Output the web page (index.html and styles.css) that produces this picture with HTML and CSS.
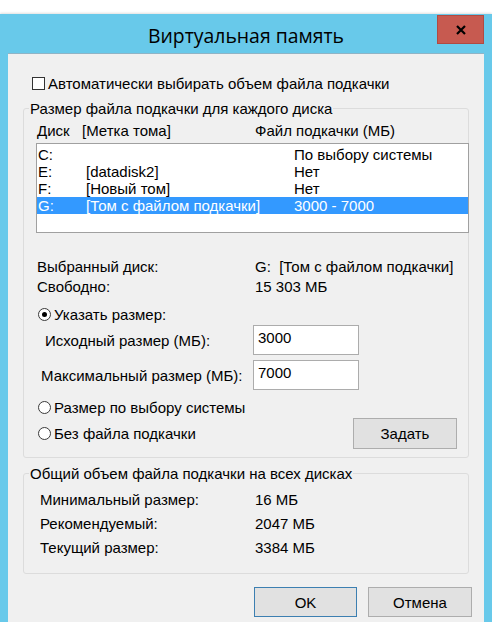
FILE: index.html
```html
<!DOCTYPE html>
<html lang="ru">
<head>
<meta charset="utf-8">
<title>Виртуальная память</title>
<link rel="stylesheet" href="styles.css">
</head>
<body>
<div class="window">
  <div class="titlebar">
    <div></div>
    <div class="title">Виртуальная память</div>
    <div class="close-wrap">
      <div class="close">
        <svg width="10" height="10" viewBox="0 0 10 10"><path d="M1 1 L9 9 M9 1 L1 9" stroke="#000" stroke-width="2.2" fill="none"/></svg>
      </div>
    </div>
  </div>
  <div class="content">
    <div class="check-row">
      <span class="checkbox"></span>
      <span>Автоматически выбирать объем файла подкачки</span>
    </div>

    <fieldset class="group g1">
      <legend>Размер файла подкачки для каждого диска</legend>
      <div class="list-head">
        <span>Диск</span>
        <span>[Метка тома]</span>
        <span>Файл подкачки (МБ)</span>
      </div>
      <div class="listbox">
        <div class="item"><span>C:</span><span></span><span>По выбору системы</span></div>
        <div class="item"><span>E:</span><span>[datadisk2]</span><span>Нет</span></div>
        <div class="item"><span>F:</span><span>[Новый том]</span><span>Нет</span></div>
        <div class="item selected"><span>G:</span><span>[Том с файлом подкачки]</span><span>3000 - 7000</span></div>
      </div>
      <div class="info">
        <div class="info-row"><span>Выбранный диск:</span><span>G:&nbsp; [Том с файлом подкачки]</span></div>
        <div class="info-row"><span>Свободно:</span><span>15 303 МБ</span></div>
      </div>
      <div class="radio-row first"><span class="radio checked"></span><span>Указать размер:</span></div>
      <div class="field-row r1"><span class="lbl">Исходный размер (МБ):</span><div class="input">3000</div></div>
      <div class="field-row r2"><span class="lbl">Максимальный размер (МБ):</span><div class="input">7000</div></div>
      <div class="radio-row second"><span class="radio"></span><span>Размер по выбору системы</span></div>
      <div class="radio-row third">
        <div class="radio-label"><span class="radio"></span><span>Без файла подкачки</span></div>
        <div class="btn set">Задать</div>
      </div>
    </fieldset>

    <fieldset class="group g2">
      <legend>Общий объем файла подкачки на всех дисках</legend>
      <div class="totals">
        <div class="total-row"><span>Минимальный размер:</span><span>16 МБ</span></div>
        <div class="total-row"><span>Рекомендуемый:</span><span>2047 МБ</span></div>
        <div class="total-row"><span>Текущий размер:</span><span>3384 МБ</span></div>
      </div>
    </fieldset>

    <div class="buttons">
      <div class="btn ok">OK</div>
      <div class="btn">Отмена</div>
    </div>
  </div>
</div>
</body>
</html>
```
FILE: styles.css
```css
* { box-sizing: border-box; }
html, body { margin: 0; padding: 0; background: #fff; }
body {
  font-family: "Liberation Sans", Arial, sans-serif;
  font-size: 15px;
  color: #000;
  overflow: hidden;
}
.window {
  margin-top: 14px;
  height: 608px;
  padding: 0 8px;
  background: #68c9ea;
  box-shadow: 0 -1px 2px rgba(0,0,0,0.12);
}
.titlebar {
  height: 39px;
  display: grid;
  grid-template-columns: 1fr auto 1fr;
  align-items: start;
}
.title {
  font-family: "Open Sans", "Noto Sans", sans-serif;
  font-size: 19.4px;
  line-height: 28px;
  padding-top: 8px;
  color: #000;
  white-space: nowrap;
}
.close-wrap { display: flex; justify-content: flex-end; }
.close {
  margin-top: 1px;
  width: 47px;
  height: 29px;
  background: #c75a50;
  border: 1px solid #b04a42;
  display: flex;
  align-items: center;
  justify-content: center;
}
.close svg { display: block; margin-top: 1px; }
.content {
  background: #f0f0f0;
  border-top: 1px solid #8fb4c6;
  height: 569px;
  padding-top: 21px;
}
.check-row {
  display: flex;
  align-items: center;
  height: 17px;
  line-height: 17px;
  padding-left: 24px;
  gap: 3px;
}
.checkbox {
  width: 13px;
  height: 13px;
  border: 1px solid #333;
  background: #fff;
  flex: none;
}
.group {
  margin: 8px 15px 0 15px;
  padding: 0;
  border: 1px solid #dcdcdc;
  border-radius: 3px;
  min-width: 0;
}
.group legend {
  margin-left: 5px;
  padding: 0 1px;
  line-height: 17px;
  height: 17px;
}
.g1 { padding-bottom: 8px; }
.list-head {
  margin-top: 5px;
  height: 17px;
  line-height: 17px;
  display: grid;
  grid-template-columns: 45px 173px 1fr;
  padding-left: 13px;
  white-space: nowrap;
}
.listbox {
  margin: 4px -1px 0 12px;
  height: 90px;
  border: 1px solid #a0a0a0;
  background: #fff;
  padding-top: 2px;
}
.item {
  height: 17px;
  line-height: 17px;
  display: grid;
  grid-template-columns: 48px 208px 1fr;
  padding-left: 1px;
  white-space: nowrap;
}
.item.selected { background: #3399ff; color: #fff; }
.info { margin-top: 24px; padding-left: 13px; }
.info-row {
  height: 20px;
  line-height: 20px;
  display: grid;
  grid-template-columns: 218px 1fr;
  white-space: nowrap;
}
.radio-row {
  display: flex;
  align-items: center;
  padding-left: 14px;
  gap: 3px;
  line-height: 17px;
  height: 17px;
}
.radio-row.first { margin-top: 9px; }
.radio-row.second { margin-top: 9px; }
.radio-row.third {
  margin-top: 2px;
  height: 31px;
  justify-content: space-between;
  padding-right: 11px;
}
.radio-label { display: flex; align-items: center; gap: 3px; }
.radio {
  width: 13px;
  height: 13px;
  border-radius: 50%;
  border: 1px solid #3a3a3a;
  background: #fff;
  flex: none;
  display: flex;
  align-items: center;
  justify-content: center;
}
.radio.checked::after {
  content: "";
  width: 5px;
  height: 5px;
  border-radius: 50%;
  background: #000;
}
.field-row {
  display: flex;
  align-items: center;
  height: 30px;
  white-space: nowrap;
}
.field-row.r1 { margin-top: 2px; padding-left: 21px; }
.field-row.r2 { margin-top: 5px; padding-left: 17px; }
.field-row .lbl { flex: 1; }
.input {
  width: 106px;
  height: 30px;
  margin-right: 109px;
  background: #fff;
  border: 1px solid #acacac;
  padding: 3px 0 0 4px;
  line-height: 17px;
}
.btn {
  height: 30px;
  background: #e1e1e1;
  border: 1px solid #adadad;
  display: flex;
  align-items: center;
  justify-content: center;
  line-height: 17px;
}
.btn.set { width: 104px; height: 31px; }
.g2 { margin-top: 7px; padding-bottom: 13px; }
.totals { padding-top: 6px; padding-left: 16px; }
.total-row {
  height: 24px;
  line-height: 24px;
  display: grid;
  grid-template-columns: 215px 1fr;
  white-space: nowrap;
}
.buttons {
  margin-top: 13px;
  display: flex;
  justify-content: flex-end;
  gap: 11px;
  padding-right: 12px;
}
.buttons .btn { width: 104px; }
.buttons .btn.ok { width: 103px; border-color: #3c7fb1; }
```
